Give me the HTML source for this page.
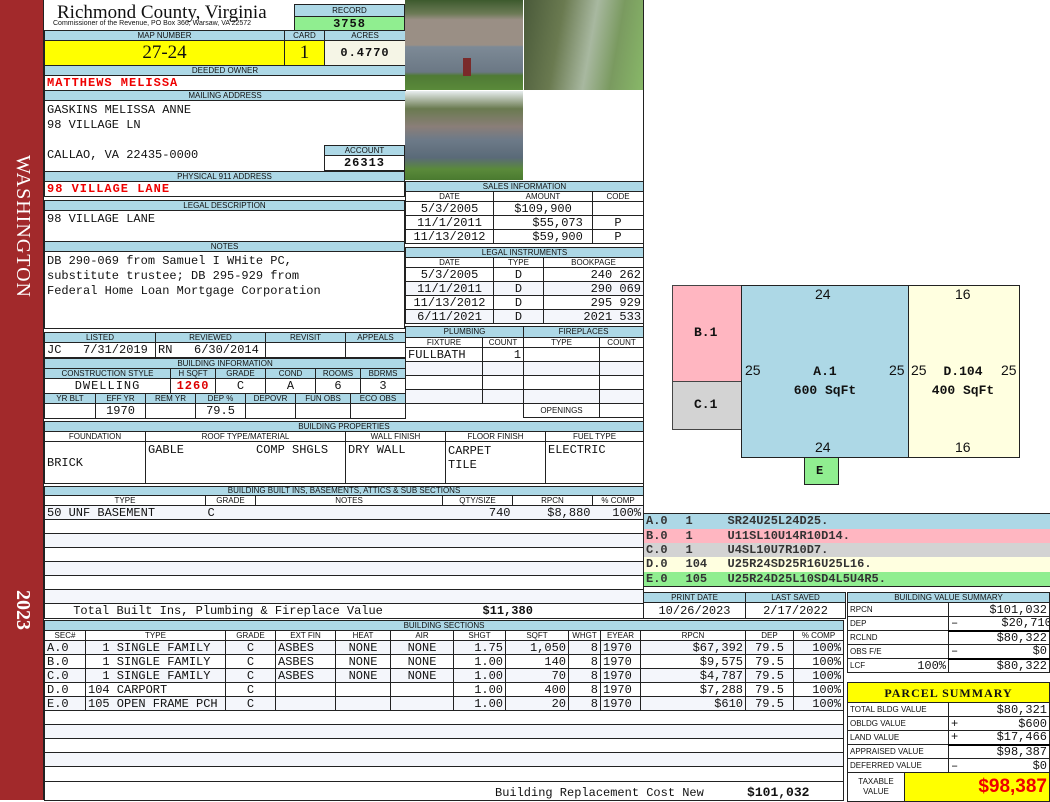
<!DOCTYPE html>
<html><head><meta charset="utf-8"><style>
*{margin:0;padding:0;box-sizing:border-box}
body{width:1050px;height:800px;background:#fff;position:relative;overflow:hidden;font-family:"Liberation Mono",monospace;font-size:12px;color:#111}
.a{position:absolute}
table{position:absolute;border-collapse:collapse;table-layout:fixed}
td{border:1px solid #222;padding:0 2px;overflow:hidden;white-space:nowrap;font-family:"Liberation Mono",monospace;font-size:12px;line-height:12px}
td.h{background:#add8e6;font-family:"Liberation Sans",sans-serif;font-size:8px;text-align:center;line-height:8px;padding:0}
.r{text-align:right}.c{text-align:center}
tr.al td{background:#f4f6fb}
.sb{font-family:"Liberation Sans",sans-serif;font-size:8px}
.sc td{font-weight:bold;color:#333}
</style></head><body>
<div class="a" style="left:0;top:0;width:44px;height:800px;background:#a2292b"></div>
<div class="a" style="left:12px;top:155px;width:22px;height:170px;color:#fff;font-family:'Liberation Serif',serif;font-size:20px;writing-mode:vertical-rl;letter-spacing:1px">WASHINGTON</div>
<div class="a" style="left:12px;top:590px;width:22px;height:40px;color:#fff;font-family:'Liberation Serif',serif;font-size:20px;font-weight:bold;writing-mode:vertical-rl">2023</div>
<div class="a" style="left:43px;top:0;width:1px;height:800px;background:#222"></div>

<div class="a" style="left:57px;top:2px;font-family:'Liberation Serif',serif;font-size:19px;line-height:22px">Richmond County, Virginia</div>
<div class="a" style="left:53px;top:20px;font-family:'Liberation Sans',sans-serif;font-size:7px;line-height:8px">Commissioner of the Revenue, PO Box 366, Warsaw, VA 22572</div>
<table style="left:294px;top:4px;width:111px"><tr><td class="h" style="height:12px">RECORD</td></tr><tr><td class="c" style="height:14px;background:#90ee90;font-weight:bold;font-size:12px;letter-spacing:1px">3758</td></tr></table>

<table style="left:44px;top:30px;width:361px">
<col style="width:240px"><col style="width:40px"><col style="width:81px">
<tr><td class="h" style="height:10px">MAP NUMBER</td><td class="h">CARD</td><td class="h">ACRES</td></tr>
<tr><td class="c" style="height:25px;background:#ffff00;font-family:'Liberation Serif',serif;font-size:19px">27-24</td><td class="c" style="background:#ffff00;font-family:'Liberation Serif',serif;font-size:19px">1</td><td class="c" style="background:#f5f5e6;font-weight:bold;letter-spacing:1px">0.4770</td></tr>
<tr><td class="h" colspan="3" style="height:10px">DEEDED OWNER</td></tr>
<tr><td colspan="3" style="height:15px;color:#e00;font-weight:bold;letter-spacing:1px;font-size:12px">MATTHEWS MELISSA</td></tr>
<tr><td class="h" colspan="3" style="height:10px">MAILING ADDRESS</td></tr>
<tr><td colspan="3" style="height:71px;vertical-align:top;border-bottom:none"></td></tr>
</table>
<div class="a" style="left:47px;top:103px;line-height:15px">GASKINS MELISSA ANNE<br>98 VILLAGE LN</div>
<div class="a" style="left:47px;top:148px">CALLAO, VA 22435-0000</div>
<table style="left:324px;top:145px;width:81px"><tr><td class="h" style="height:10px">ACCOUNT</td></tr><tr><td class="c" style="height:15px;font-weight:bold;letter-spacing:1px">26313</td></tr></table>
<table style="left:44px;top:171px;width:361px">
<tr><td class="h" style="height:10px">PHYSICAL 911 ADDRESS</td></tr>
<tr><td style="height:15px;color:#e00;font-weight:bold;letter-spacing:1px">98 VILLAGE LANE</td></tr>
</table>
<table style="left:44px;top:200px;width:361px">
<tr><td class="h" style="height:10px">LEGAL DESCRIPTION</td></tr>
<tr><td style="height:31px;vertical-align:top;padding-top:2px">98 VILLAGE LANE</td></tr>
<tr><td class="h" style="height:10px">NOTES</td></tr>
<tr><td style="height:77px;vertical-align:top;padding-top:2px;line-height:15px">DB 290-069 from Samuel I WHite PC,<br>substitute trustee; DB 295-929 from<br>Federal Home Loan Mortgage Corporation</td></tr>
</table>
<table style="left:44px;top:332px;width:361px">
<col style="width:111px"><col style="width:110px"><col style="width:80px"><col style="width:60px">
<tr><td class="h" style="height:10px">LISTED</td><td class="h">REVIEWED</td><td class="h">REVISIT</td><td class="h">APPEALS</td></tr>
<tr><td style="height:15px">JC&nbsp;&nbsp;&nbsp;7/31/2019</td><td>RN&nbsp;&nbsp;&nbsp;6/30/2014</td><td></td><td></td></tr>
</table>
<table style="left:44px;top:358px;width:361px">
<col style="width:126px"><col style="width:45px"><col style="width:50px"><col style="width:50px"><col style="width:45px"><col style="width:45px">
<tr><td class="h" colspan="6" style="height:10px">BUILDING INFORMATION</td></tr>
<tr><td class="h" style="height:10px">CONSTRUCTION STYLE</td><td class="h">H SQFT</td><td class="h">GRADE</td><td class="h">COND</td><td class="h">ROOMS</td><td class="h">BDRMS</td></tr>
<tr><td class="c" style="height:15px;letter-spacing:1px">DWELLING</td><td class="c" style="color:#d00;font-weight:bold;letter-spacing:1px">1260</td><td class="c">C</td><td class="c">A</td><td class="c">6</td><td class="c">3</td></tr>
</table>
<table style="left:44px;top:393px;width:361px">
<col style="width:51px"><col style="width:50px"><col style="width:50px"><col style="width:50px"><col style="width:50px"><col style="width:55px"><col style="width:55px">
<tr><td class="h" style="height:10px">YR BLT</td><td class="h">EFF YR</td><td class="h">REM YR</td><td class="h">DEP %</td><td class="h">DEPOVR</td><td class="h">FUN OBS</td><td class="h">ECO OBS</td></tr>
<tr><td style="height:15px"></td><td class="c">1970</td><td></td><td class="c">79.5</td><td></td><td></td><td></td></tr>
</table>

<div class="a" style="left:405px;top:0;width:118px;height:90px;background:linear-gradient(#3d5a2e 0%,#6b7a55 15%,#9a8f85 22%,#9a8f85 50%,#7d8a96 52%,#6b7885 80%,#4f7a35 84%,#5a8a3a 100%)"></div>
<div class="a" style="left:463px;top:58px;width:8px;height:18px;background:#7a2a2a"></div>
<div class="a" style="left:524px;top:0;width:119px;height:90px;background:linear-gradient(100deg,#4a5a3a 0%,#6a7a50 30%,#a8b8a0 55%,#7a9a60 75%,#88b868 100%)"></div>
<div class="a" style="left:405px;top:91px;width:118px;height:89px;background:linear-gradient(#e8eef0 0%,#6a7a50 20%,#8a7e78 40%,#6d7a88 55%,#5a6a78 75%,#5a8a3a 88%,#4a7a30 100%)"></div>
<div class="a" style="left:643px;top:0;width:1px;height:512px;background:#222"></div>

<table style="left:405px;top:181px;width:238px">
<col style="width:88px"><col style="width:99px"><col style="width:51px">
<tr><td class="h" colspan="3" style="height:10px">SALES INFORMATION</td></tr>
<tr><td class="h" style="height:10px;background:#fff">DATE</td><td class="h" style="background:#fff">AMOUNT</td><td class="h" style="background:#fff">CODE</td></tr>
<tr><td class="c" style="height:14px">5/3/2005</td><td class="c">$109,900</td><td class="c"></td></tr>
<tr><td class="c" style="height:14px">11/1/2011</td><td class="r">$55,073&nbsp;</td><td class="c">P</td></tr>
<tr><td class="c" style="height:14px">11/13/2012</td><td class="r">$59,900&nbsp;</td><td class="c">P</td></tr>
</table>
<table style="left:405px;top:247px;width:238px">
<col style="width:88px"><col style="width:50px"><col style="width:100px">
<tr><td class="h" colspan="3" style="height:10px">LEGAL INSTRUMENTS</td></tr>
<tr><td class="h" style="height:10px;background:#fff">DATE</td><td class="h" style="background:#fff">TYPE</td><td class="h" style="background:#fff">BOOKPAGE</td></tr>
<tr><td class="c" style="height:14px">5/3/2005</td><td class="c">D</td><td class="r">240 262</td></tr>
<tr class="al"><td class="c" style="height:14px">11/1/2011</td><td class="c">D</td><td class="r">290 069</td></tr>
<tr><td class="c" style="height:14px">11/13/2012</td><td class="c">D</td><td class="r">295 929</td></tr>
<tr class="al"><td class="c" style="height:14px">6/11/2021</td><td class="c">D</td><td class="r">2021 533</td></tr>
</table>
<table style="left:405px;top:326px;width:238px">
<col style="width:77px"><col style="width:41px"><col style="width:76px"><col style="width:44px">
<tr><td class="h" colspan="2" style="height:11px">PLUMBING</td><td class="h" colspan="2">FIREPLACES</td></tr>
<tr><td class="h" style="height:10px;background:#fff">FIXTURE</td><td class="h" style="background:#fff">COUNT</td><td class="h" style="background:#fff">TYPE</td><td class="h" style="background:#fff">COUNT</td></tr>
<tr><td style="height:14px">FULLBATH</td><td class="r">1</td><td></td><td></td></tr>
<tr class="al"><td style="height:14px"></td><td></td><td></td><td></td></tr>
<tr><td style="height:14px"></td><td></td><td></td><td></td></tr>
<tr class="al"><td style="height:14px"></td><td></td><td></td><td></td></tr>
<tr><td colspan="2" style="height:14px;border-bottom:none;border-left:none"></td><td class="h" style="background:#fff">OPENINGS</td><td></td></tr>
</table>

<table style="left:44px;top:421px;width:599px">
<col style="width:101px"><col style="width:200px"><col style="width:100px"><col style="width:100px"><col style="width:98px">
<tr><td class="h" colspan="5" style="height:10px">BUILDING PROPERTIES</td></tr>
<tr><td class="h" style="height:10px;background:#fff">FOUNDATION</td><td class="h" style="background:#fff">ROOF TYPE/MATERIAL</td><td class="h" style="background:#fff">WALL FINISH</td><td class="h" style="background:#fff">FLOOR FINISH</td><td class="h" style="background:#fff">FUEL TYPE</td></tr>
<tr><td style="height:42px">BRICK</td><td style="vertical-align:top;padding-top:2px">GABLE&nbsp;&nbsp;&nbsp;&nbsp;&nbsp;&nbsp;&nbsp;&nbsp;&nbsp;&nbsp;COMP SHGLS</td><td style="vertical-align:top;padding-top:2px">DRY WALL</td><td style="vertical-align:top;padding-top:2px;line-height:14px">CARPET<br>TILE</td><td style="vertical-align:top;padding-top:2px">ELECTRIC</td></tr>
</table>

<table style="left:44px;top:486px;width:599px">
<col style="width:161px"><col style="width:50px"><col style="width:187px"><col style="width:70px"><col style="width:80px"><col style="width:51px">
<tr><td class="h" colspan="6" style="height:9px">BUILDING BUILT INS, BASEMENTS, ATTICS &amp; SUB SECTIONS</td></tr>
<tr><td class="h" style="height:10px;background:#fff">TYPE</td><td class="h" style="background:#fff">GRADE</td><td class="h" style="background:#fff">NOTES</td><td class="h" style="background:#fff">QTY/SIZE</td><td class="h" style="background:#fff">RPCN</td><td class="h" style="background:#fff">% COMP</td></tr>
<tr class="al"><td style="height:14px;border-right:none">50 UNF BASEMENT</td><td style="border:none;border-top:1px solid #222">C</td><td style="border:none;border-top:1px solid #222"></td><td class="r" style="border:none;border-top:1px solid #222">740</td><td class="r" style="border:none;border-top:1px solid #222">$8,880</td><td class="r" style="border-left:none">100%</td></tr>
<tr><td colspan="6" style="height:14px"></td></tr>
<tr class="al"><td colspan="6" style="height:14px"></td></tr>
<tr><td colspan="6" style="height:14px"></td></tr>
<tr class="al"><td colspan="6" style="height:14px"></td></tr>
<tr><td colspan="6" style="height:14px"></td></tr>
<tr class="al"><td colspan="6" style="height:14px"></td></tr>
<tr><td colspan="3" class="r" style="height:15px;border-right:none">Total Built Ins, Plumbing &amp; Fireplace Value&nbsp;&nbsp;&nbsp;&nbsp;&nbsp;&nbsp;&nbsp;&nbsp;</td><td colspan="3" style="border-left:none;font-weight:bold;padding-left:40px">$11,380</td></tr>
</table>

<table style="left:44px;top:620px;width:799px">
<col style="width:41px"><col style="width:140px"><col style="width:50px"><col style="width:60px"><col style="width:55px"><col style="width:63px"><col style="width:52px"><col style="width:63px"><col style="width:32px"><col style="width:40px"><col style="width:105px"><col style="width:48px"><col style="width:50px">
<tr><td class="h" colspan="13" style="height:10px">BUILDING SECTIONS</td></tr>
<tr><td class="h" style="height:10px;background:#fff">SEC#</td><td class="h" style="background:#fff">TYPE</td><td class="h" style="background:#fff">GRADE</td><td class="h" style="background:#fff">EXT FIN</td><td class="h" style="background:#fff">HEAT</td><td class="h" style="background:#fff">AIR</td><td class="h" style="background:#fff">SHGT</td><td class="h" style="background:#fff">SQFT</td><td class="h" style="background:#fff">WHGT</td><td class="h" style="background:#fff">EYEAR</td><td class="h" style="background:#fff">RPCN</td><td class="h" style="background:#fff">DEP</td><td class="h" style="background:#fff">% COMP</td></tr>
<tr class="al"><td style="height:14px">A.0</td><td>&nbsp;&nbsp;1 SINGLE FAMILY</td><td class="c">C</td><td>ASBES</td><td class="c">NONE</td><td class="c">NONE</td><td class="r">1.75</td><td class="r">1,050</td><td class="r">8</td><td>1970</td><td class="r">$67,392</td><td class="c">79.5</td><td class="r">100%</td></tr>
<tr><td style="height:14px">B.0</td><td>&nbsp;&nbsp;1 SINGLE FAMILY</td><td class="c">C</td><td>ASBES</td><td class="c">NONE</td><td class="c">NONE</td><td class="r">1.00</td><td class="r">140</td><td class="r">8</td><td>1970</td><td class="r">$9,575</td><td class="c">79.5</td><td class="r">100%</td></tr>
<tr class="al"><td style="height:14px">C.0</td><td>&nbsp;&nbsp;1 SINGLE FAMILY</td><td class="c">C</td><td>ASBES</td><td class="c">NONE</td><td class="c">NONE</td><td class="r">1.00</td><td class="r">70</td><td class="r">8</td><td>1970</td><td class="r">$4,787</td><td class="c">79.5</td><td class="r">100%</td></tr>
<tr><td style="height:14px">D.0</td><td>104 CARPORT</td><td class="c">C</td><td></td><td></td><td></td><td class="r">1.00</td><td class="r">400</td><td class="r">8</td><td>1970</td><td class="r">$7,288</td><td class="c">79.5</td><td class="r">100%</td></tr>
<tr class="al"><td style="height:14px">E.0</td><td>105 OPEN FRAME PCH</td><td class="c">C</td><td></td><td></td><td></td><td class="r">1.00</td><td class="r">20</td><td class="r">8</td><td>1970</td><td class="r">$610</td><td class="c">79.5</td><td class="r">100%</td></tr>
<tr><td colspan="13" style="height:14px"></td></tr>
<tr class="al"><td colspan="13" style="height:14px"></td></tr>
<tr><td colspan="13" style="height:14px"></td></tr>
<tr class="al"><td colspan="13" style="height:14px"></td></tr>
<tr><td colspan="13" style="height:15px"></td></tr>
<tr><td colspan="13" style="height:19px;padding-left:450px;padding-top:3px">Building Replacement Cost New&nbsp;&nbsp;&nbsp;&nbsp;&nbsp;&nbsp;<b style="font-size:13px">$101,032</b></td></tr>
</table>

<div class="a" style="left:672px;top:285px;width:70px;height:97px;background:#ffb6c1;border:1px solid #444"></div>
<div class="a" style="left:672px;top:381px;width:70px;height:49px;background:#d3d3d3;border:1px solid #444"></div>
<div class="a" style="left:741px;top:285px;width:168px;height:173px;background:#add8e6;border:1px solid #222"></div>
<div class="a" style="left:908px;top:285px;width:112px;height:173px;background:#ffffe0;border:1px solid #222"></div>
<div class="a" style="left:804px;top:457px;width:35px;height:28px;background:#90ee90;border:1px solid #222"></div>
<div class="a" style="font-family:'Liberation Mono',monospace;font-weight:bold;font-size:13px;left:694px;top:325px">B.1</div>
<div class="a" style="font-family:'Liberation Mono',monospace;font-weight:bold;font-size:13px;left:694px;top:397px">C.1</div>
<div class="a" style="font-family:'Liberation Mono',monospace;font-weight:bold;font-size:12px;left:816px;top:464px">E</div>
<div class="a" style="font-family:'Liberation Sans',sans-serif;font-size:14px;left:815px;top:286px">24</div>
<div class="a" style="font-family:'Liberation Sans',sans-serif;font-size:14px;left:815px;top:439px">24</div>
<div class="a" style="font-family:'Liberation Sans',sans-serif;font-size:14px;left:745px;top:362px">25</div>
<div class="a" style="font-family:'Liberation Sans',sans-serif;font-size:14px;left:889px;top:362px">25</div>
<div class="a" style="font-family:'Liberation Sans',sans-serif;font-size:14px;left:911px;top:362px">25</div>
<div class="a" style="font-family:'Liberation Sans',sans-serif;font-size:14px;left:1001px;top:362px">25</div>
<div class="a" style="font-family:'Liberation Sans',sans-serif;font-size:14px;left:955px;top:286px">16</div>
<div class="a" style="font-family:'Liberation Sans',sans-serif;font-size:14px;left:955px;top:439px">16</div>
<div class="a" style="font-family:'Liberation Mono',monospace;font-weight:bold;font-size:13px;left:790px;top:362px;width:70px;text-align:center;line-height:19px">A.1<br>600 SqFt</div>
<div class="a" style="font-family:'Liberation Mono',monospace;font-weight:bold;font-size:13px;left:928px;top:362px;width:70px;text-align:center;line-height:19px">D.104<br>400 SqFt</div>

<table class="sc" style="left:643px;top:513px;width:406px;border-top:1px solid #222">
<col style="width:40px"><col style="width:42px"><col style="width:324px">
<tr style="background:#add8e6"><td style="height:15px;border:none;border-left:1px solid #222">A.0</td><td style="border:none">1</td><td style="border:none">SR24U25L24D25.</td></tr>
<tr style="background:#ffb6c1"><td style="height:14px;border:none;border-left:1px solid #222">B.0</td><td style="border:none">1</td><td style="border:none">U11SL10U14R10D14.</td></tr>
<tr style="background:#d3d3d3"><td style="height:14px;border:none;border-left:1px solid #222">C.0</td><td style="border:none">1</td><td style="border:none">U4SL10U7R10D7.</td></tr>
<tr style="background:#ffffe0"><td style="height:15px;border:none;border-left:1px solid #222">D.0</td><td style="border:none">104</td><td style="border:none">U25R24SD25R16U25L16.</td></tr>
<tr style="background:#90ee90"><td style="height:15px;border:none;border-left:1px solid #222;border-bottom:1px solid #222">E.0</td><td style="border:none;border-bottom:1px solid #222">105</td><td style="border:none;border-bottom:1px solid #222">U25R24D25L10SD4L5U4R5.</td></tr>
</table>

<table style="left:643px;top:592px;width:202px">
<col style="width:102px"><col style="width:100px">
<tr><td class="h" style="height:10px">PRINT DATE</td><td class="h">LAST SAVED</td></tr>
<tr><td class="c" style="height:16px">10/26/2023</td><td class="c">2/17/2022</td></tr>
</table>

<table style="left:847px;top:592px;width:202px">
<col style="width:101px"><col style="width:101px">
<tr><td class="h" colspan="2" style="height:10px">BUILDING VALUE SUMMARY</td></tr>
<tr><td class="sb" style="height:14px">RPCN</td><td class="r">$101,032</td></tr>
<tr><td class="sb" style="height:14px">DEP</td><td class="r" style="border-bottom:2px solid #000">–&nbsp;&nbsp;&nbsp;&nbsp;&nbsp;&nbsp;$20,710</td></tr>
<tr><td class="sb" style="height:14px">RCLND</td><td class="r">$80,322</td></tr>
<tr><td class="sb" style="height:14px">OBS F/E</td><td class="r" style="border-bottom:2px solid #000"><span style="float:left">–</span>$0</td></tr>
<tr><td class="sb" style="height:14px">LCF<span style="float:right;font-family:'Liberation Mono',monospace;font-size:12px">100%</span></td><td class="r">$80,322</td></tr>
</table>

<table style="left:847px;top:682px;width:202px">
<col style="width:57px"><col style="width:44px"><col style="width:101px">
<tr><td colspan="3" class="c" style="height:20px;background:#ffff00;font-family:'Liberation Serif',serif;font-weight:bold;font-size:12px;letter-spacing:1px">PARCEL SUMMARY</td></tr>
<tr><td colspan="2" class="sb" style="height:14px">TOTAL BLDG VALUE</td><td class="r">$80,321</td></tr>
<tr><td colspan="2" class="sb" style="height:14px">OBLDG VALUE</td><td class="r"><span style="float:left">+</span>$600</td></tr>
<tr><td colspan="2" class="sb" style="height:14px">LAND VALUE</td><td class="r" style="border-bottom:2px solid #000"><span style="float:left">+</span>$17,466</td></tr>
<tr><td colspan="2" class="sb" style="height:14px">APPRAISED VALUE</td><td class="r">$98,387</td></tr>
<tr><td colspan="2" class="sb" style="height:14px">DEFERRED VALUE</td><td class="r"><span style="float:left">–</span>$0</td></tr>
<tr><td class="sb c" style="height:29px;line-height:10px">TAXABLE<br>VALUE</td><td colspan="2" class="r" style="background:#ffff00;color:#e00;font-family:'Liberation Sans',sans-serif;font-weight:bold;font-size:19px;line-height:20px">$98,387</td></tr>
</table>
</body></html>
